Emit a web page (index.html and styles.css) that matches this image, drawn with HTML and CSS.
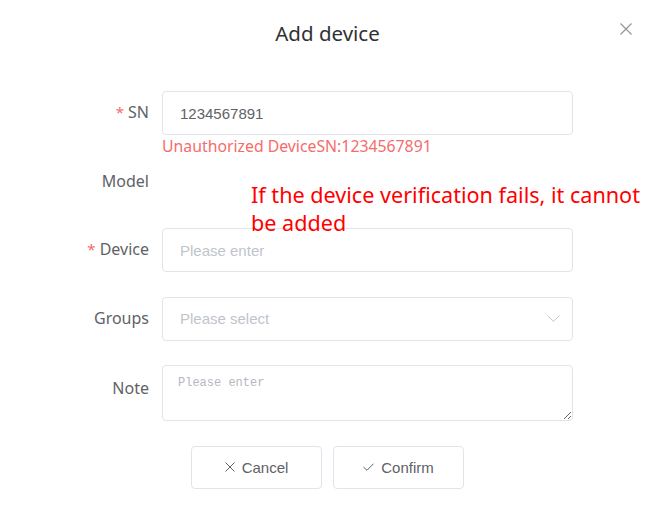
FILE: index.html
```html
<!DOCTYPE html>
<html lang="en">
<head>
<meta charset="utf-8">
<title>Add device</title>
<link rel="stylesheet" href="styles.css">
</head>
<body>
<div class="dialog">
  <div class="dialog-header">
    <span class="dialog-title">Add device</span>
    <button class="close-btn" aria-label="Close">
      <svg width="12" height="12" viewBox="0 0 12 12"><path d="M0.5 0.5 L11.5 11.5 M11.5 0.5 L0.5 11.5" stroke="#909399" stroke-width="1.1" fill="none"/></svg>
    </button>
  </div>
  <form class="form">
    <div class="row">
      <label class="label"><span class="req">*</span> SN</label>
      <div class="control">
        <input class="input" type="text" value="1234567891">
        <div class="error">Unauthorized DeviceSN:1234567891</div>
      </div>
    </div>
    <div class="row">
      <label class="label">Model</label>
      <div class="control"></div>
    </div>
    <div class="row">
      <label class="label"><span class="req">*</span> Device</label>
      <div class="control">
        <input class="input" type="text" placeholder="Please enter">
      </div>
    </div>
    <div class="row">
      <label class="label">Groups</label>
      <div class="control">
        <div class="select">
          <span class="placeholder">Please select</span>
          <svg class="chevron" width="13" height="7" viewBox="0 0 13 7"><path d="M0.5 0.5 L6.5 6.3 L12.5 0.5" stroke="#c0c4cc" stroke-width="1" fill="none"/></svg>
        </div>
      </div>
    </div>
    <div class="row">
      <label class="label note-label">Note</label>
      <div class="control">
        <textarea class="textarea" placeholder="Please enter"></textarea>
      </div>
    </div>
    <div class="actions">
      <button type="button" class="btn">
        <svg width="10" height="10" viewBox="0 0 10 10"><path d="M0.5 0.5 L9.5 9.5 M9.5 0.5 L0.5 9.5" stroke="#606266" stroke-width="1" fill="none"/></svg>
        Cancel
      </button>
      <button type="button" class="btn">
        <svg width="11" height="8" viewBox="0 0 11 8"><path d="M0.5 4 L4 7.3 L10.5 0.7" stroke="#606266" stroke-width="1" fill="none"/></svg>
        Confirm
      </button>
    </div>
  </form>
  <div class="note-annotation">If the device verification fails, it cannot be added</div>
</div>
</body>
</html>
```
FILE: styles.css
```css
* { box-sizing: border-box; }
html, body {
  margin: 0;
  padding: 0;
  background: #ffffff;
}
body {
  width: 655px;
  height: 518px;
  overflow: hidden;
  font-family: "Noto Sans", "Liberation Sans", sans-serif;
}
.dialog {
  position: relative;
  width: 655px;
  height: 518px;
  background: #fff;
}
.dialog-header {
  position: relative;
  padding: 19px 20px 44px;
  text-align: center;
  height: 91px;
}
.dialog-title {
  font-size: 20.5px;
  line-height: 28px;
  color: #303133;
}
.close-btn {
  position: absolute;
  top: 23px;
  right: 23px;
  width: 12px;
  height: 12px;
  padding: 0;
  border: 0;
  background: transparent;
  display: flex;
}
.form {
  display: flex;
  flex-direction: column;
  gap: 24.6px;
}
.row {
  display: flex;
  min-height: 44px;
}
.label {
  width: 162px;
  flex: none;
  padding-right: 13px;
  text-align: right;
  font-size: 16px;
  line-height: 43px;
  color: #606266;
}
.note-label {
  line-height: 46px;
}
.req {
  color: #f56c6c;
  font-size: 15px;
}
.control {
  position: relative;
  width: 411px;
  flex: none;
}
.input {
  display: block;
  width: 411px;
  height: 44px;
  border: 1px solid #e2e4ec;
  border-radius: 4px;
  padding: 0 17px;
  font-family: "Liberation Sans", Arial, sans-serif;
  font-size: 15px;
  color: #606266;
  outline: none;
  background: #fff;
}
.input::placeholder {
  color: #c0c4cc;
}
.error {
  position: absolute;
  left: 0;
  top: 100%;
  padding-top: 0;
  font-size: 15.8px;
  line-height: 22px;
  color: #f56c6c;
  white-space: nowrap;
}
.select {
  display: flex;
  align-items: center;
  justify-content: space-between;
  width: 411px;
  height: 44px;
  border: 1px solid #e2e4ec;
  border-radius: 4px;
  padding: 0 12px 0 17px;
  font-family: "Liberation Sans", Arial, sans-serif;
  font-size: 15px;
}
.placeholder {
  color: #c0c4cc;
}
.chevron {
  display: block;
}
.textarea {
  display: block;
  width: 411px;
  height: 56px;
  border: 1px solid #e2e4ec;
  border-radius: 4px;
  padding: 10px 15px;
  font-family: "Liberation Mono", monospace;
  font-size: 12px;
  color: #606266;
  resize: vertical;
  outline: none;
}
.textarea::placeholder {
  color: #b4b8bf;
}
.actions {
  display: flex;
  justify-content: center;
  gap: 11px;
}
.btn {
  display: flex;
  align-items: center;
  justify-content: center;
  gap: 7px;
  width: 131px;
  height: 43px;
  border: 1px solid #e2e4ec;
  border-radius: 4px;
  background: #fff;
  font-family: "Liberation Sans", Arial, sans-serif;
  font-size: 15px;
  color: #606266;
  padding: 0;
}
.note-annotation {
  position: absolute;
  left: 251px;
  top: 181px;
  width: 405px;
  font-size: 21.6px;
  line-height: 28px;
  color: #ff0000;
}
```
